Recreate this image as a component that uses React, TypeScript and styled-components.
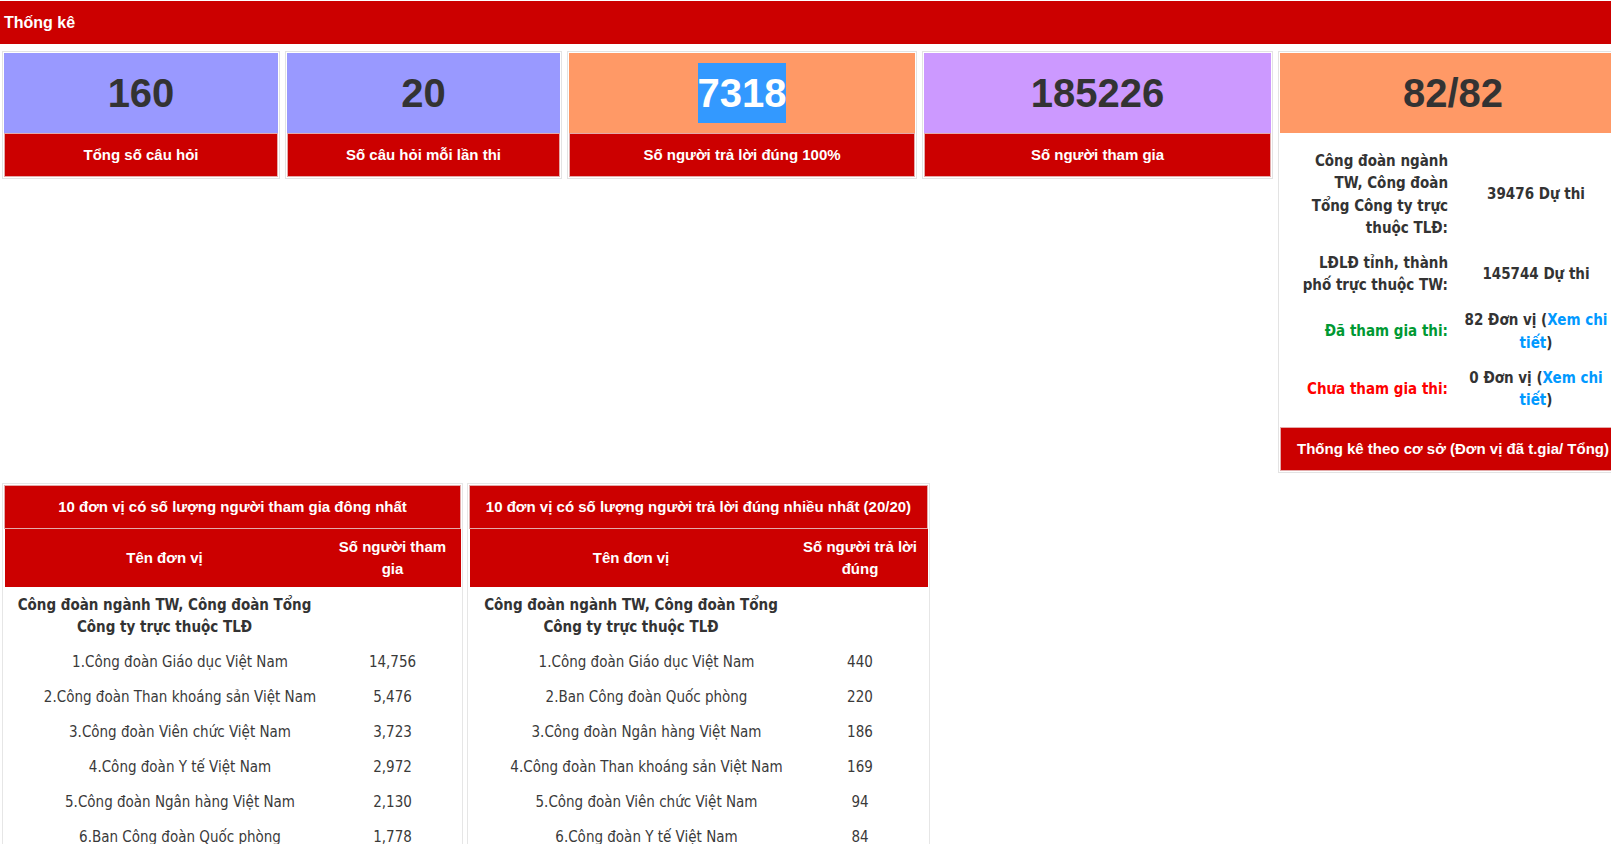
import React from 'react';
import styled, { createGlobalStyle } from 'styled-components';

const GlobalStyle = createGlobalStyle`
  html, body {
    margin: 0;
    padding: 0;
    background: #fff;
    overflow: hidden;
  }
  body {
    font-family: "DejaVu Sans Condensed", "DejaVu Sans", Tahoma, sans-serif;
    color: #333;
  }
  * { box-sizing: border-box; }
`;

const RED = '#cc0000';
const ARIAL = '"Liberation Sans", Arial, sans-serif';

const Page = styled.div`
  width: 1640px;
`;

const TitleBar = styled.div`
  margin-top: 1px;
  height: 43px;
  padding-left: 4px;
  display: flex;
  align-items: center;
  background: ${RED};
  color: #fff;
  font: bold 16px ${ARIAL};
`;

const StatsRow = styled.div`
  display: flex;
  align-items: flex-start;
  gap: 5px;
  padding: 7px 0 0 2px;
`;

const Card = styled.div<{ $w: number }>`
  width: ${p => p.$w}px;
  flex: none;
  border: 1px solid #e3e3e3;
  padding: 1px;
  background: #fff;
`;

const NumberBox = styled.div<{ $bg: string }>`
  background: ${p => p.$bg};
  padding: 10px 0;
  text-align: center;
  font: bold 40px/60px ${ARIAL};
  color: #333;
`;

const Selected = styled.span`
  display: inline-block;
  background: #3399ff;
  color: #fff;
  line-height: 60px;
`;

const CardLabel = styled.div`
  background: ${RED};
  border: 1px solid #e4aaaa;
  padding: 10px 4px;
  text-align: center;
  color: #fff;
  font: bold 15px/22px ${ARIAL};
  white-space: nowrap;
`;

const InfoGrid = styled.div`
  display: grid;
  grid-template-columns: 174px 1fr;
  padding: 10.5px 0 9.5px;
  font-size: 15px;
  line-height: 22.4px;
  font-weight: bold;
`;

const InfoLabel = styled.div<{ $color?: string }>`
  padding: 6.25px 6px 6.25px 19px;
  text-align: right;
  color: ${p => p.$color || '#333'};
  display: flex;
  align-items: center;
  justify-content: flex-end;
`;

const InfoValue = styled.div`
  padding: 6.25px 10px 6.25px 2px;
  text-align: center;
  color: #333;
  display: flex;
  align-items: center;
  justify-content: center;
`;

const Link = styled.a`
  color: #0099ff;
  text-decoration: none;
`;

const TablesRow = styled.div`
  display: flex;
  align-items: flex-start;
  gap: 4px;
  padding: 10px 0 0 2px;
`;

const TableBox = styled.div<{ $w: number }>`
  width: ${p => p.$w}px;
  flex: none;
  border: 1px solid #e6e6e6;
  padding: 1px;
`;

const Table = styled.table`
  width: 100%;
  border-collapse: collapse;
  table-layout: fixed;
`;

const CaptionCell = styled.th`
  background: ${RED};
  border: 1px solid #e4aaaa;
  padding: 10px 4px;
  color: #fff;
  font: bold 15px/22px ${ARIAL};
  text-align: center;
  white-space: nowrap;
`;

const HeadCell = styled.th`
  background: ${RED};
  padding: 6.5px 8px;
  color: #fff;
  font: bold 15px/22.5px ${ARIAL};
  text-align: center;
`;

const GroupCell = styled.td`
  padding: 6.5px 8px;
  font-size: 15px;
  line-height: 22.5px;
  font-weight: bold;
  color: #333;
  text-align: center;
`;

const BodyCell = styled.td<{ $indent?: boolean }>`
  padding: 6.25px 8px 6.25px ${p => (p.$indent ? 39 : 8)}px;
  font-size: 15px;
  line-height: 22.5px;
  color: #3a3a3a;
  text-align: center;
  white-space: nowrap;
`;

type Row = [string, string];

const topJoined: Row[] = [
  ['1.Công đoàn Giáo dục Việt Nam', '14,756'],
  ['2.Công đoàn Than khoáng sản Việt Nam', '5,476'],
  ['3.Công đoàn Viên chức Việt Nam', '3,723'],
  ['4.Công đoàn Y tế Việt Nam', '2,972'],
  ['5.Công đoàn Ngân hàng Việt Nam', '2,130'],
  ['6.Ban Công đoàn Quốc phòng', '1,778'],
];

const topCorrect: Row[] = [
  ['1.Công đoàn Giáo dục Việt Nam', '440'],
  ['2.Ban Công đoàn Quốc phòng', '220'],
  ['3.Công đoàn Ngân hàng Việt Nam', '186'],
  ['4.Công đoàn Than khoáng sản Việt Nam', '169'],
  ['5.Công đoàn Viên chức Việt Nam', '94'],
  ['6.Công đoàn Y tế Việt Nam', '84'],
];

const RankTable: React.FC<{
  width: number;
  nameCol: number;
  title: string;
  countTitle: string;
  rows: Row[];
}> = ({ width, nameCol, title, countTitle, rows }) => (
  <TableBox $w={width}>
    <Table>
      <colgroup>
        <col style={{ width: nameCol }} />
        <col />
      </colgroup>
      <thead>
        <tr>
          <CaptionCell colSpan={2}>{title}</CaptionCell>
        </tr>
        <tr>
          <HeadCell>Tên đơn vị</HeadCell>
          <HeadCell>{countTitle}</HeadCell>
        </tr>
      </thead>
      <tbody>
        <tr>
          <GroupCell>Công đoàn ngành TW, Công đoàn Tổng Công ty trực thuộc TLĐ</GroupCell>
          <GroupCell />
        </tr>
        {rows.map(([name, count]) => (
          <tr key={name}>
            <BodyCell $indent>{name}</BodyCell>
            <BodyCell>{count}</BodyCell>
          </tr>
        ))}
      </tbody>
    </Table>
  </TableBox>
);

const App: React.FC = () => (
  <Page>
    <GlobalStyle />
    <TitleBar>Thống kê</TitleBar>

    <StatsRow>
      <Card $w={278}>
        <NumberBox $bg="#9999ff">160</NumberBox>
        <CardLabel>Tổng số câu hỏi</CardLabel>
      </Card>
      <Card $w={277}>
        <NumberBox $bg="#9999ff">20</NumberBox>
        <CardLabel>Số câu hỏi mỗi lần thi</CardLabel>
      </Card>
      <Card $w={350}>
        <NumberBox $bg="#ff9966">
          <Selected>7318</Selected>
        </NumberBox>
        <CardLabel>Số người trả lời đúng 100%</CardLabel>
      </Card>
      <Card $w={351}>
        <NumberBox $bg="#cc99ff">185226</NumberBox>
        <CardLabel>Số người tham gia</CardLabel>
      </Card>
      <Card $w={350}>
        <NumberBox $bg="#ff9966">82/82</NumberBox>
        <InfoGrid>
          <InfoLabel>Công đoàn ngành TW, Công đoàn Tổng Công ty trực thuộc TLĐ:</InfoLabel>
          <InfoValue>39476 Dự thi</InfoValue>
          <InfoLabel>LĐLĐ tỉnh, thành phố trực thuộc TW:</InfoLabel>
          <InfoValue>145744 Dự thi</InfoValue>
          <InfoLabel $color="#009933">Đã tham gia thi:</InfoLabel>
          <InfoValue>
            <span>
              82 Đơn vị (<Link href="#">Xem chi tiết</Link>)
            </span>
          </InfoValue>
          <InfoLabel $color="#ff0000">Chưa tham gia thi:</InfoLabel>
          <InfoValue>
            <span>
              0 Đơn vị (<Link href="#">Xem chi tiết</Link>)
            </span>
          </InfoValue>
        </InfoGrid>
        <CardLabel>Thống kê theo cơ sở (Đơn vị đã t.gia/ Tổng)</CardLabel>
      </Card>
    </StatsRow>

    <TablesRow>
      <RankTable
        width={461}
        nameCol={320}
        title="10 đơn vị có số lượng người tham gia đông nhất"
        countTitle="Số người tham gia"
        rows={topJoined}
      />
      <RankTable
        width={463}
        nameCol={323}
        title="10 đơn vị có số lượng người trả lời đúng nhiều nhất (20/20)"
        countTitle="Số người trả lời đúng"
        rows={topCorrect}
      />
    </TablesRow>
  </Page>
);

export default App;
